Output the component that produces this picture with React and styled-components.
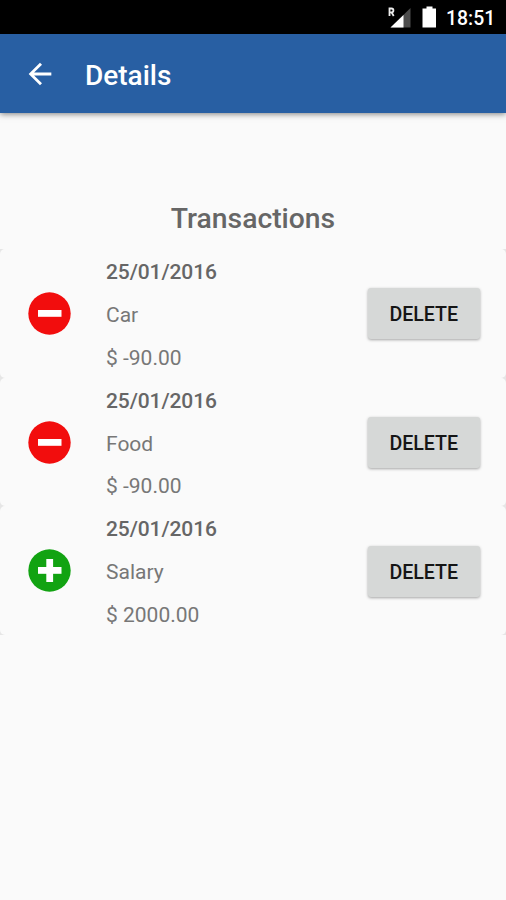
import React from "react";
import styled, { createGlobalStyle } from "styled-components";

const GlobalStyle = createGlobalStyle`
  * {
    box-sizing: border-box;
  }
  body {
    margin: 0;
    background-color: #fafafa;
    font-family: Roboto, sans-serif;
  }
`;
const Screen = styled.div`
  width: 506px;
  height: 900px;
  display: flex;
  flex-direction: column;
  overflow: hidden;
  background-color: #fafafa;
`;
const StatusBar = styled.div`
  height: 34px;
  flex: none;
  display: flex;
  justify-content: flex-end;
  padding-right: 11px;
  background-color: #000;
`;
const StatusIcons = styled.svg`
  width: 58px;
  height: 34px;
`;
const Clock = styled.span`
  font-size: 19.4px;
  line-height: 37px;
  font-weight: 500;
  color: #fff;
  width: 49px;
  white-space: nowrap;
`;
const Toolbar = styled.header`
  height: 79px;
  flex: none;
  display: flex;
  align-items: center;
  padding: 2px 0 0 23px;
  background-color: #285fa3;
  box-shadow: 0 1px 6px rgba(0, 0, 0, 0.5);
`;
const BackButton = styled.button`
  width: 34px;
  height: 34px;
  margin-right: 28px;
  padding: 0;
  border: none;
  background-color: transparent;
  cursor: pointer;
  svg {
    display: block;
    margin-top: -2px;
    fill: #fff;
  }
`;
const Title = styled.h1`
  margin: 2px 0 0;
  font-size: 28px;
  line-height: 34px;
  font-weight: 500;
  color: #fff;
`;
const Heading = styled.h2`
  margin: 88px 0 13px;
  font-size: 28.3px;
  line-height: 35px;
  font-weight: 500;
  text-align: center;
  color: #666;
`;
const List = styled.ul`
  margin: 0;
  padding: 0;
  list-style: none;
  background-color: #e6e6e6;
`;
const Row = styled.li`
  height: 128.7px;
  display: flex;
  align-items: center;
  padding: 0 26px 0 28px;
  border-radius: 5px;
  background-color: #fafafa;
`;
const TypeIcon = styled.svg`
  width: 43px;
  height: 43px;
  flex: none;
  margin-right: 35px;
  fill: ${({ $income }) => ($income ? "#12a312" : "#f20d0d")};
`;
const Info = styled.div`
  flex: 1;
  display: flex;
  flex-direction: column;
  padding-top: 3px;
  margin-bottom: -1px;
`;
const Line = styled.span`
  font-size: 21px;
  line-height: 42.9px;
  font-weight: ${({ $bold }) => ($bold ? 500 : 400)};
  letter-spacing: ${({ $bold }) => ($bold ? "-0.1px" : "0")};
  color: ${({ $bold }) => ($bold ? "#666" : "#777")};
`;
const DeleteButton = styled.button`
  width: 112.5px;
  height: 51px;
  margin-top: 1px;
  padding: 2px 0 0;
  border: none;
  border-radius: 3px;
  background-color: #d6d8d7;
  box-shadow: 0 1px 3px rgba(0, 0, 0, 0.35);
  font-family: inherit;
  font-size: 19.6px;
  font-weight: 500;
  color: #151515;
  cursor: pointer;
`;

const transactions = [
  { id: 1, date: "25/01/2016", name: "Car", amount: -90 },
  { id: 2, date: "25/01/2016", name: "Food", amount: -90 },
  { id: 3, date: "25/01/2016", name: "Salary", amount: 2000 },
];

function Transaction({ date, name, amount }) {
  const income = amount > 0;
  return (
    <Row>
      <TypeIcon $income={income} viewBox="0 0 43 43">
        <circle cx="21.5" cy="21.5" r="21.2" />
        <rect x="10" y="18" width="23.5" height="6.8" fill="#fff" />
        {income && <rect x="18.3" y="10" width="6.8" height="23" fill="#fff" />}
      </TypeIcon>
      <Info>
        <Line $bold>{date}</Line>
        <Line>{name}</Line>
        <Line>{`$ ${amount.toFixed(2)}`}</Line>
      </Info>
      <DeleteButton>DELETE</DeleteButton>
    </Row>
  );
}

export default function App() {
  return (
    <>
      <GlobalStyle />
      <Screen>
        <StatusBar>
          <StatusIcons viewBox="0 0 58 34">
            <path d="M22.500 8v19.500H2.500z" fill="#4d4d4d" />
            <path d="M15.500 15V27.500H2.500z" fill="#fff" />
            <path
              d="M1.500 16V8.500h2a1.900 1.900 0 0 1 0 3.800H1.500M3.500 12.300l2.200 3.700"
              fill="none"
              stroke="#eee"
              strokeWidth="1.8"
            />
            <path d="M38.500 6.500h6v2h3.500v19h-13.500v-19h4z" fill="#fff" />
          </StatusIcons>
          <Clock>18:51</Clock>
        </StatusBar>
        <Toolbar>
          <BackButton aria-label="Back">
            <svg width="34" height="34" viewBox="0 0 24 24">
              <path d="M20 11H7.830l5.590-5.590L12 4l-8 8 8 8 1.410-1.410L7.830 13H20v-2z" />
            </svg>
          </BackButton>
          <Title>Details</Title>
        </Toolbar>
        <Heading>Transactions</Heading>
        <List>
          {transactions.map((item) => (
            <Transaction key={item.id} {...item} />
          ))}
        </List>
      </Screen>
    </>
  );
}
